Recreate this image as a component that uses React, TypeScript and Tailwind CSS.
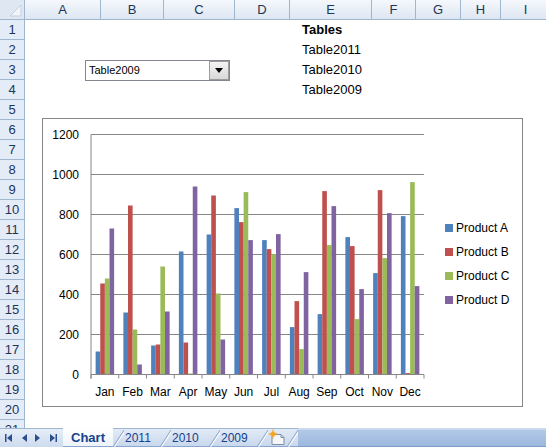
// Excel 2007 style sheet with a combo box and a clustered column chart

const COLUMNS: { name: string; width: number }[] = [
  { name: 'A', width: 76 },
  { name: 'B', width: 63 },
  { name: 'C', width: 71 },
  { name: 'D', width: 55 },
  { name: 'E', width: 82 },
  { name: 'F', width: 44 },
  { name: 'G', width: 45 },
  { name: 'H', width: 40 },
  { name: 'I', width: 50 },
];

const ROWS = Array.from({ length: 21 }, (_, i) => i + 1);

const CELLS: Record<string, { text: string; bold?: boolean }> = {
  E1: { text: 'Tables', bold: true },
  E2: { text: 'Table2011' },
  E3: { text: 'Table2010' },
  E4: { text: 'Table2009' },
};

const MONTHS = ['Jan', 'Feb', 'Mar', 'Apr', 'May', 'Jun', 'Jul', 'Aug', 'Sep', 'Oct', 'Nov', 'Dec'];

const SERIES = [
  { name: 'Product A', color: '#4f81bd', values: [115, 310, 145, 615, 700, 832, 672, 237, 302, 687, 507, 792] },
  { name: 'Product B', color: '#c0504d', values: [455, 845, 150, 160, 895, 762, 627, 367, 917, 642, 922, 7] },
  { name: 'Product C', color: '#9bbb59', values: [480, 225, 540, 5, 405, 912, 602, 127, 647, 277, 582, 962] },
  { name: 'Product D', color: '#8064a2', values: [730, 50, 315, 940, 175, 672, 702, 512, 842, 427, 807, 442] },
];

// chart geometry, relative to the chart box
const PX0 = 48;
const PX1 = 381;
const PY0 = 255.5;
const SCALE = 0.2;
const CAT = (PX1 - PX0) / 12;
const BAR = CAT / 6;

function Chart() {
  const y = (v: number) => PY0 - v * SCALE;
  return (
    <svg width={479} height={287} className="block">
      {[200, 400, 600, 800, 1000, 1200].map((v) => (
        <line key={v} x1={PX0} x2={PX1} y1={y(v)} y2={y(v)} stroke="#868686" strokeWidth={1} />
      ))}
      {SERIES.map((s, si) =>
        s.values.map((v, ci) => (
          <rect
            key={`${si}-${ci}`}
            x={PX0 + ci * CAT + BAR * (1 + si)}
            y={y(v)}
            width={BAR}
            height={v * SCALE}
            fill={s.color}
          />
        )),
      )}
      <line x1={PX0} x2={PX0} y1={y(1200)} y2={PY0 + 4} stroke="#868686" strokeWidth={1} />
      <line x1={PX0} x2={PX1} y1={PY0} y2={PY0} stroke="#868686" strokeWidth={1} />
      {Array.from({ length: 13 }, (_, i) => (
        <line key={i} x1={PX0 + i * CAT} x2={PX0 + i * CAT} y1={PY0} y2={PY0 + 4} stroke="#868686" strokeWidth={1} />
      ))}
      {[0, 200, 400, 600, 800, 1000, 1200].map((v) => (
        <text key={v} x={36} y={y(v) + 4} textAnchor="end" fontSize={12} fill="#000">
          {v}
        </text>
      ))}
      {MONTHS.map((m, i) => (
        <text key={m} x={PX0 + i * CAT + CAT / 2} y={277} textAnchor="middle" fontSize={12} fill="#000">
          {m}
        </text>
      ))}
      {SERIES.map((s, i) => (
        <g key={s.name}>
          <rect x={402} y={105 + i * 24} width={8} height={8} fill={s.color} />
          <text x={413} y={113 + i * 24} fontSize={12} fill="#000">
            {s.name}
          </text>
        </g>
      ))}
    </svg>
  );
}

function ComboBox() {
  return (
    <div className="absolute left-[85px] top-[40px] w-[145px] h-[21px] border border-[#828790] bg-white flex items-center">
      <span className="flex-1 pl-[3px] text-[11px] text-black leading-none">Table2009</span>
      <div className="w-[20px] h-[19px] border border-[#9c9c9c] bg-gradient-to-b from-[#f4f4f4] to-[#d9d9d9] flex items-center justify-center">
        <svg width={8} height={5} viewBox="0 0 8 5">
          <path d="M0 0h8L4 5z" fill="#000" />
        </svg>
      </div>
    </div>
  );
}

function Slash() {
  return (
    <svg width={11} height={18} className="shrink-0">
      <line x1={0} y1={18} x2={11} y2={1} stroke="#8da6cb" strokeWidth={1} />
      <line x1={1.5} y1={18} x2={12} y2={2} stroke="#ffffff" strokeWidth={1} />
    </svg>
  );
}

function NavButtons() {
  return (
    <div className="w-[63px] shrink-0 flex items-center border-t border-[#9eb6ce] bg-gradient-to-b from-[#e6eef8] to-[#cddbee]">
      <svg width={63} height={18}>
        <g fill="#2b4f8c">
          <rect x={5} y={5} width={1.5} height={8} />
          <path d="M12 5v8l-5-4z" />
          <path d="M27 5v8l-5-4z" />
          <path d="M35 5v8l5-4z" />
          <path d="M50 5v8l5-4z" />
          <rect x={55.5} y={5} width={1.5} height={8} />
        </g>
      </svg>
    </div>
  );
}

function NewSheetIcon() {
  return (
    <svg width={19} height={18} className="shrink-0">
      <path d="M4 5.5h9l3 3v7H4z" fill="#f4f6fa" stroke="#7d8fa8" strokeWidth={1} />
      <path d="M13 5.5v3h3" fill="none" stroke="#7d8fa8" strokeWidth={1} />
      <circle cx={5} cy={5} r={2.6} fill="#f7b733" />
      <path d="M5 0.5v9M0.5 5h9" stroke="#f19a1a" strokeWidth={1} />
    </svg>
  );
}

function TabBar() {
  return (
    <div className="h-[19px] flex text-[12px] text-[#15428b] leading-none">
      <NavButtons />
      <div className="flex items-stretch border-b border-[#8aa6cf] bg-gradient-to-b from-[#e4ecf7] to-[#c9d8ee]">
        <div className="w-[50px] flex items-center justify-center bg-gradient-to-b from-white to-[#eef3fa] font-bold text-[13px]">
          Chart
        </div>
        <div className="flex items-center border-t border-[#9eb6ce]">
          <Slash />
          <span className="w-[36px] pl-[1px]">2011</span>
          <Slash />
          <span className="w-[38px] pl-[1px]">2010</span>
          <Slash />
          <span className="w-[37px] pl-[1px]">2009</span>
          <Slash />
          <NewSheetIcon />
          <Slash />
        </div>
      </div>
      <div className="flex-1 border-t-2 border-[#c9d9f0] bg-gradient-to-b from-[#b2c8e7] to-[#9db8df] border-b border-b-[#7f9dc9]" />
    </div>
  );
}

export default function App() {
  return (
    <div className="w-[546px] h-[447px] overflow-hidden bg-white flex flex-col font-['Liberation_Sans',Arial,sans-serif] select-none">
      {/* column headers */}
      <div className="h-[20px] flex shrink-0 border-b border-[#9eb6ce]">
        <div className="w-[25px] shrink-0 border-r border-[#9eb6ce] bg-[#dfe7f2] relative">
          <svg width={24} height={19} className="absolute inset-0">
            <path d="M21 5v11H10z" fill="#f1f4f8" stroke="#c3cfdf" strokeWidth={1} />
          </svg>
        </div>
        {COLUMNS.map((c) => (
          <div
            key={c.name}
            style={{ width: c.width }}
            className="shrink-0 border-r border-[#9eb6ce] bg-gradient-to-b from-[#f5f8fc] to-[#dde6f2] flex items-center justify-center text-[13px] text-[#1d3557]"
          >
            {c.name}
          </div>
        ))}
      </div>

      {/* sheet body */}
      <div className="h-[408px] flex overflow-hidden relative">
        <div className="w-[25px] shrink-0 flex flex-col border-r border-[#9eb6ce] bg-[#e4ecf7]">
          {ROWS.map((r) => (
            <div
              key={r}
              className="h-[20px] shrink-0 border-b border-[#9eb6ce] flex items-center justify-center text-[13px] text-[#1d3557]"
            >
              {r}
            </div>
          ))}
        </div>
        <div className="flex-1 flex flex-col">
          {ROWS.map((r) => (
            <div key={r} className="h-[20px] shrink-0 flex">
              {COLUMNS.map((c) => {
                const cell = CELLS[`${c.name}${r}`];
                return (
                  <div
                    key={c.name}
                    style={{ width: c.width }}
                    className={`shrink-0 flex items-center whitespace-nowrap text-[13px] text-black ${
                      cell?.bold ? 'font-bold' : ''
                    } ${c.name === 'E' ? 'pl-[12px]' : ''}`}
                  >
                    {cell?.text}
                  </div>
                );
              })}
            </div>
          ))}
        </div>

        <ComboBox />

        {/* embedded chart object */}
        <div className="absolute left-[42px] top-[98px] w-[481px] h-[289px] border border-[#868686] bg-white">
          <Chart />
        </div>
      </div>

      <TabBar />
    </div>
  );
}
